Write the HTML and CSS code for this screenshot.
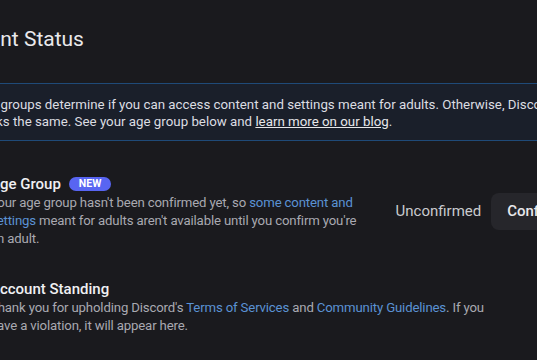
FILE: index.html
```html
<!DOCTYPE html>
<html lang="en">
<head>
<meta charset="utf-8">
<title>Account Status</title>
<link rel="stylesheet" href="styles.css">
</head>
<body>
<main class="page">
  <h1 class="title">Account Status</h1>

  <div class="notice">
    <p class="notice-text">Age groups determine if you can access content and settings meant for adults. Otherwise, Discord works the same. See your age group below and <a class="notice-link" href="#">learn more on our blog</a>.</p>
  </div>

  <section class="row row-age">
    <div class="info">
      <div class="heading">Age Group <span class="badge">NEW</span></div>
      <p class="desc">Your age group hasn't been confirmed yet, so <a class="link" href="#">some content and settings</a> meant for adults aren't available until you confirm you're an adult.</p>
    </div>
    <div class="controls">
      <span class="status">Unconfirmed</span>
      <button class="btn" type="button">Confirm</button>
    </div>
  </section>

  <section class="row row-standing">
    <div class="info">
      <div class="heading">Account Standing</div>
      <p class="desc desc-wide">Thank you for upholding Discord's <a class="link" href="#">Terms of Services</a> and <a class="link" href="#">Community Guidelines</a>. If you have a violation, it will appear here.</p>
    </div>
  </section>
</main>
</body>
</html>
```

FILE: styles.css
```css
html, body {
  margin: 0;
  padding: 0;
  overflow: hidden;
  background: #1a1a1e;
}

body {
  font-family: Roboto, "Liberation Sans", Arial, sans-serif;
  color: #dcdde0;
}

.page {
  width: 636px;
  margin-left: -59px;
  padding-top: 25px;
}

.title {
  margin: 0;
  font-size: 21px;
  line-height: 28px;
  font-weight: 400;
  color: #e9e9ec;
}

.notice {
  margin-top: 30px;
  border: 1px solid #1f4a78;
  background: #1a1f2a;
  padding: 12px 12px 10px 32px;
}

.notice-text {
  margin: 0;
  font-size: 13.3px;
  line-height: 17px;
  color: #dcdde2;
}

.notice-link {
  color: #e6e7ea;
  text-decoration: underline;
}

.row {
  display: flex;
  align-items: center;
  gap: 30px;
  padding-left: 49px;
}

.row-age {
  margin-top: 33px;
}

.row-standing {
  margin-top: 31px;
}

.info {
  flex: 1;
  min-width: 0;
}

.heading {
  display: flex;
  align-items: center;
  gap: 8px;
  font-size: 15px;
  line-height: 20px;
  font-weight: 500;
  color: #f0f0f3;
}

.badge {
  display: inline-flex;
  align-items: center;
  height: 14px;
  padding: 0 10px;
  border-radius: 7px;
  background: #5865f2;
  color: #ffffff;
  font-size: 10.5px;
  font-weight: 700;
}

.desc {
  margin: 0;
  font-size: 13.2px;
  line-height: 18px;
  letter-spacing: -0.15px;
  color: #a9a9b1;
}

.desc-wide {
  max-width: 510px;
}

.link {
  color: #5a92d4;
  text-decoration: none;
}

.controls {
  display: flex;
  align-items: center;
  gap: 10px;
  flex-shrink: 0;
}

.status {
  font-size: 15px;
  color: #c9cace;
}

.btn {
  height: 37px;
  padding: 0 16px;
  border: none;
  border-radius: 8px;
  background: #26262b;
  color: #e8e8ec;
  font-family: inherit;
  font-size: 15px;
  font-weight: 500;
}
```
